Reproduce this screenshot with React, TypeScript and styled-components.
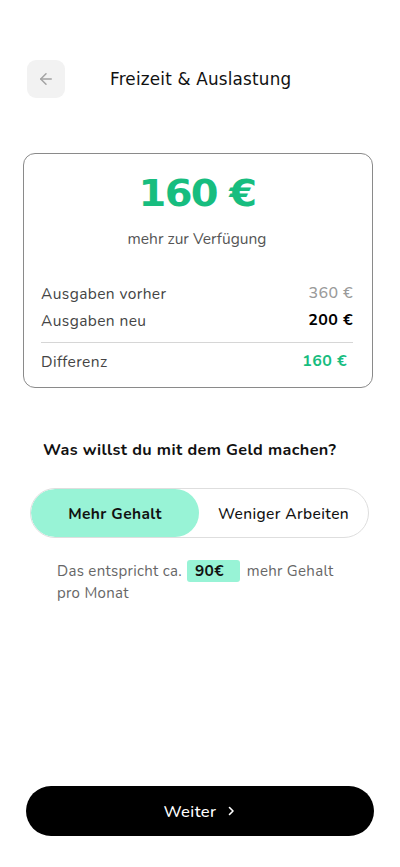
import React, { useState } from "react";
import styled, { createGlobalStyle } from "styled-components";

const GlobalStyle = createGlobalStyle`
  html, body {
    margin: 0;
    padding: 0;
    background: #ffffff;
  }
  body {
    font-family: "Nunito", "Lato", "Noto Sans", sans-serif;
    -webkit-font-smoothing: antialiased;
  }
  * {
    box-sizing: border-box;
  }
`;

const Screen = styled.div`
  width: 400px;
  height: 867px;
  display: flex;
  flex-direction: column;
  padding: 60px 26px 31px 23px;
`;

const Header = styled.header`
  display: flex;
  align-items: center;
  gap: 45px;
  padding-left: 4px;
`;

const BackButton = styled.button`
  width: 38px;
  height: 38px;
  border: none;
  border-radius: 9px;
  background: #f2f2f2;
  display: flex;
  align-items: center;
  justify-content: center;
  padding: 0;
  cursor: pointer;
`;

const Title = styled.h1`
  margin: 0;
  font-family: "DejaVu Sans", sans-serif;
  font-size: 16.8px;
  font-weight: 500;
  color: #111;
  letter-spacing: 0.2px;
`;

const Card = styled.section`
  margin-top: 55px;
  width: 350px;
  border: 1px solid #8a8a8a;
  border-radius: 12px;
  padding: 20px 19px 15px 17px;
  display: flex;
  flex-direction: column;
`;

const BigAmount = styled.div`
  text-align: center;
  font-family: "DejaVu Sans", sans-serif;
  font-weight: 800;
  font-size: 37px;
  line-height: 40px;
  color: #17bd7f;
  transform: scaleX(1.08);
  letter-spacing: -1.5px;
`;

const Caption = styled.div`
  margin-top: 14px;
  text-align: center;
  font-size: 15.5px;
  color: #555;
`;

const Rows = styled.div`
  margin-top: 34px;
  display: flex;
  flex-direction: column;
  gap: 6px;
`;

const Row = styled.div<{ $inset?: number }>`
  display: flex;
  justify-content: space-between;
  align-items: center;
  font-size: 15.5px;
  line-height: 21px;
  padding-right: ${(p) => p.$inset ?? 0}px;
`;

const Label = styled.span`
  color: #444;
  letter-spacing: 0.4px;
`;

const Value = styled.span<{ $tone: "muted" | "strong" | "green" }>`
  letter-spacing: 0.4px;
  color: ${(p) =>
    p.$tone === "muted" ? "#9a9a9a" : p.$tone === "green" ? "#17bd7f" : "#000"};
  font-weight: ${(p) => (p.$tone === "muted" ? 500 : 700)};
  font-size: 16px;
`;

const Divider = styled.hr`
  margin: 11px 0 8px;
  border: none;
  border-top: 1px solid #d6d6d6;
`;

const Question = styled.h2`
  margin: 51px 0 0 20px;
  font-size: 16.2px;
  font-weight: 700;
  color: #111;
  letter-spacing: 0.4px;
`;

const Toggle = styled.div`
  margin: 27px 0 0 7px;
  width: 339px;
  height: 50px;
  border: 1px solid #dedede;
  border-radius: 25px;
  display: flex;
  overflow: hidden;
`;

const ToggleOption = styled.button<{ $active: boolean }>`
  border: none;
  border-radius: 25px;
  font-family: inherit;
  font-size: 15.5px;
  letter-spacing: 0.4px;
  cursor: pointer;
  height: 100%;
  background: ${(p) => (p.$active ? "#98f3d6" : "transparent")};
  color: #111;
  font-weight: ${(p) => (p.$active ? 700 : 500)};
  flex: ${(p) => (p.$active ? "0 0 168px" : "1")};
  padding: 0;
`;

const Hint = styled.p`
  margin: 22px 0 0 34px;
  width: 282px;
  font-size: 15px;
  line-height: 22px;
  color: #666;
  letter-spacing: 0.3px;
`;

const Badge = styled.span`
  display: inline-block;
  background: #98f3d6;
  color: #111;
  font-weight: 700;
  border-radius: 3px;
  padding: 0 16px 0 8px;
  margin: 0 7px 0 5px;
  line-height: 22px;
  font-size: 15.5px;
  vertical-align: top;
`;

const Spacer = styled.div`
  flex: 1;
`;

const PrimaryButton = styled.button`
  margin-left: 3px;
  width: 348px;
  height: 50px;
  border: none;
  border-radius: 25px;
  background: #000;
  color: #fff;
  font-family: inherit;
  font-size: 16.5px;
  font-weight: 500;
  letter-spacing: 0.4px;
  display: flex;
  align-items: center;
  justify-content: center;
  gap: 8px;
  cursor: pointer;
`;

const ArrowLeft = () => (
  <svg width="18" height="18" viewBox="0 0 24 24" fill="none" stroke="#a3a3a3" strokeWidth="2" strokeLinecap="round" strokeLinejoin="round">
    <path d="M19 12H5" />
    <path d="M12 19l-7-7 7-7" />
  </svg>
);

const ChevronRight = () => (
  <svg width="12" height="12" viewBox="0 0 24 24" fill="none" stroke="#fff" strokeWidth="3.2" strokeLinecap="round" strokeLinejoin="round">
    <path d="M9 5l7 7-7 7" />
  </svg>
);

export default function App() {
  const [mode, setMode] = useState<"gehalt" | "arbeit">("gehalt");

  return (
    <>
      <GlobalStyle />
      <Screen>
        <Header>
          <BackButton aria-label="Zurück">
            <ArrowLeft />
          </BackButton>
          <Title>Freizeit &amp; Auslastung</Title>
        </Header>

        <Card>
          <BigAmount>160 €</BigAmount>
          <Caption>mehr zur Verfügung</Caption>
          <Rows>
            <Row>
              <Label>Ausgaben vorher</Label>
              <Value $tone="muted">360 €</Value>
            </Row>
            <Row>
              <Label>Ausgaben neu</Label>
              <Value $tone="strong">200 €</Value>
            </Row>
          </Rows>
          <Divider />
          <Row $inset={6}>
            <Label>Differenz</Label>
            <Value $tone="green">160 €</Value>
          </Row>
        </Card>

        <Question>Was willst du mit dem Geld machen?</Question>

        <Toggle>
          <ToggleOption $active={mode === "gehalt"} onClick={() => setMode("gehalt")}>
            Mehr Gehalt
          </ToggleOption>
          <ToggleOption $active={mode === "arbeit"} onClick={() => setMode("arbeit")}>
            Weniger Arbeiten
          </ToggleOption>
        </Toggle>

        <Hint>
          Das entspricht ca.<Badge>90€</Badge>mehr Gehalt pro Monat
        </Hint>

        <Spacer />

        <PrimaryButton>
          Weiter
          <ChevronRight />
        </PrimaryButton>
      </Screen>
    </>
  );
}
